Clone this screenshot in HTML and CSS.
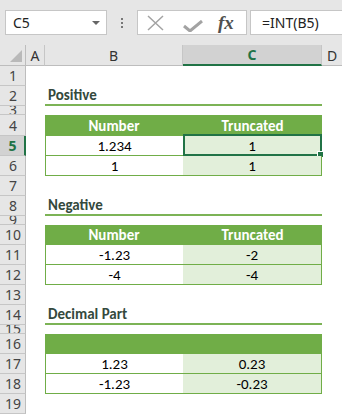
FILE: index.html
```html
<!DOCTYPE html>
<html lang="en">
<head>
    <meta charset="UTF-8">
    <meta name="viewport" content="width=device-width, initial-scale=1.0">
    <title>INT function</title>
    <link rel="stylesheet" href="styles.css">
</head>
<body>
    <div class="toolbar">
        <div class="namebox"><span>C5</span><span class="caret"></span></div>
        <div class="grip"><i></i><i></i><i></i></div>
        <div class="fbtns">
            <svg width="20" height="16" viewBox="0 0 20 16"><path d="M2 1 L17 15 M17 1 L2 15" stroke="#a3a3a3" stroke-width="1.5" fill="none"/></svg>
            <svg width="20" height="12" viewBox="0 0 20 12"><path d="M1 6 L7 11 L19 1" stroke="#a3a3a3" stroke-width="3" fill="none"/></svg>
            <span class="fx">fx</span>
        </div>
        <div class="fbar">=INT(B5)</div>
    </div>

    <div class="sheet">
        <div class="row colhead">
            <div class="corner"><span class="tri"></span></div>
            <div class="ch">A</div>
            <div class="ch">B</div>
            <div class="ch sel">C</div>
            <div class="ch last">D</div>
        </div>

        <div class="row"><div class="rh">1</div><div></div><div></div><div></div><div></div></div>
        <div class="row"><div class="rh">2</div><div></div><div class="title">Positive</div><div class="title"></div><div></div></div>
        <div class="row short"><div class="rh"><span>3</span></div><div></div><div></div><div></div><div></div></div>
        <div class="row tall"><div class="rh">4</div><div></div><div class="th">Number</div><div class="th">Truncated</div><div></div></div>
        <div class="row"><div class="rh sel">5</div><div></div><div class="tb">1.234</div><div class="tc active">1</div><div></div></div>
        <div class="row"><div class="rh">6</div><div></div><div class="tb">1</div><div class="tc">1</div><div></div></div>
        <div class="row"><div class="rh">7</div><div></div><div></div><div></div><div></div></div>
        <div class="row"><div class="rh">8</div><div></div><div class="title">Negative</div><div class="title"></div><div></div></div>
        <div class="row short"><div class="rh"><span>9</span></div><div></div><div></div><div></div><div></div></div>
        <div class="row"><div class="rh">10</div><div></div><div class="th">Number</div><div class="th">Truncated</div><div></div></div>
        <div class="row"><div class="rh">11</div><div></div><div class="tb">-1.23</div><div class="tc">-2</div><div></div></div>
        <div class="row"><div class="rh">12</div><div></div><div class="tb">-4</div><div class="tc">-4</div><div></div></div>
        <div class="row"><div class="rh">13</div><div></div><div></div><div></div><div></div></div>
        <div class="row"><div class="rh">14</div><div></div><div class="title">Decimal Part</div><div class="title"></div><div></div></div>
        <div class="row short"><div class="rh"><span>15</span></div><div></div><div></div><div></div><div></div></div>
        <div class="row"><div class="rh">16</div><div></div><div class="th"></div><div class="th"></div><div></div></div>
        <div class="row"><div class="rh">17</div><div></div><div class="tb">1.23</div><div class="tc">0.23</div><div></div></div>
        <div class="row"><div class="rh">18</div><div></div><div class="tb">-1.23</div><div class="tc">-0.23</div><div></div></div>
        <div class="row"><div class="rh">19</div><div></div><div></div><div></div><div></div></div>
    </div>
</body>
</html>
```

FILE: styles.css
```css
body {
    margin: 0;
    width: 342px;
    height: 416px;
    overflow: hidden;
    background-color: #fff;
    font-family: "Noto Sans", "Open Sans", sans-serif;
}
.toolbar {
    height: 45px;
    box-sizing: border-box;
    padding-top: 10px;
    display: flex;
    align-items: flex-start;
    background-color: #e6e6e6;
}
.namebox {
    margin-left: 5px;
    width: 102px;
    height: 25px;
    box-sizing: border-box;
    background-color: #fff;
    border: 1px solid #c6c6c6;
    display: flex;
    align-items: center;
    justify-content: space-between;
    padding: 0 6px 0 7px;
    font-size: 14px;
    color: #222;
}
.caret {
    width: 0;
    height: 0;
    border-left: 4px solid transparent;
    border-right: 4px solid transparent;
    border-top: 4px solid #666;
}
.grip {
    width: 30px;
    height: 25px;
    display: flex;
    flex-direction: column;
    align-items: center;
    justify-content: center;
    gap: 2px;
}
.grip i {
    width: 2px;
    height: 2px;
    background-color: #777;
}
.fbtns {
    width: 110px;
    height: 25px;
    box-sizing: border-box;
    background-color: #fff;
    border: 1px solid #c6c6c6;
    display: flex;
    align-items: center;
    padding-left: 8px;
    gap: 17px;
}
.fbtns svg:nth-child(2) {
    margin-top: 6px;
}
.fx {
    font-family: "Liberation Serif", serif;
    font-style: italic;
    font-weight: bold;
    font-size: 19px;
    color: #505050;
    margin-left: -2px;
}
.fbar {
    margin-left: 3px;
    flex: 1;
    height: 25px;
    box-sizing: border-box;
    background-color: #fff;
    border: 1px solid #c6c6c6;
    border-right: none;
    padding-left: 11px;
    font-size: 14px;
    line-height: 23px;
    color: #222;
}
.row {
    display: grid;
    grid-template-columns: 26px 19px 138px 139px 20px;
    height: 20px;
    font-family: Carlito, Lato, sans-serif;
    font-size: 15px;
}
.row.short {
    height: 9px;
}
.row.tall {
    height: 21px;
}
.row > div {
    box-sizing: border-box;
    display: flex;
    align-items: center;
    justify-content: center;
    overflow: hidden;
}
.colhead {
    height: 21px;
    font-family: "Noto Sans", "Open Sans", sans-serif;
    font-size: 14px;
    color: #333;
}
.corner {
    background-color: #e6e6e6;
    border-right: 1px solid #bdbdbd;
    border-bottom: 1px solid #bdbdbd;
    position: relative;
}
.tri {
    position: absolute;
    right: 3px;
    bottom: 3px;
    width: 0;
    height: 0;
    border-left: 12px solid transparent;
    border-bottom: 12px solid #b9b9b9;
}
.ch {
    background-color: #e6e6e6;
    border-right: 1px solid #c6c6c6;
    border-bottom: 1px solid #bdbdbd;
}
.ch.last {
    border-right: none;
}
.ch.sel {
    background-color: #d2d2d2;
    border-bottom: 2px solid #217346;
    color: #217346;
    font-weight: bold;
}
.row > .rh {
    background-color: #e6e6e6;
    border-right: 1px solid #bdbdbd;
    border-bottom: 1px solid #c6c6c6;
    font-family: "Noto Sans", "Open Sans", sans-serif;
    font-size: 14px;
    color: #444;
    padding-left: 1px;
}
.row.short > .rh {
    align-items: flex-end;
}
.row.short > .rh span {
    line-height: 8px;
    height: 8px;
    overflow: hidden;
    display: block;
}
.row > .rh.sel {
    background-color: #d2d2d2;
    border-right: 2px solid #217346;
    color: #217346;
    font-weight: bold;
}
.row > .title {
    justify-content: flex-start;
    padding-left: 3px;
    border-bottom: 2px solid #7cb356;
    font-weight: bold;
    color: #34493d;
    font-size: 15px;
}
.row > .th {
    background-color: #70ad47;
    color: #fff;
    font-weight: bold;
}
.row > .tb {
    border-left: 1px solid #70ad47;
    border-bottom: 1px solid #70ad47;
    color: #000;
}
.row > .tc {
    background-color: #e2efda;
    border-right: 1px solid #70ad47;
    border-bottom: 1px solid #70ad47;
    color: #000;
    overflow: visible;
    position: relative;
}
.active::before {
    content: "";
    position: absolute;
    left: 0;
    top: -2px;
    right: -1px;
    bottom: -1px;
    border: 2px solid #217346;
}
.active::after {
    content: "";
    position: absolute;
    right: -3px;
    bottom: -3px;
    width: 5px;
    height: 5px;
    background-color: #217346;
    border: 1px solid #fff;
}
```
